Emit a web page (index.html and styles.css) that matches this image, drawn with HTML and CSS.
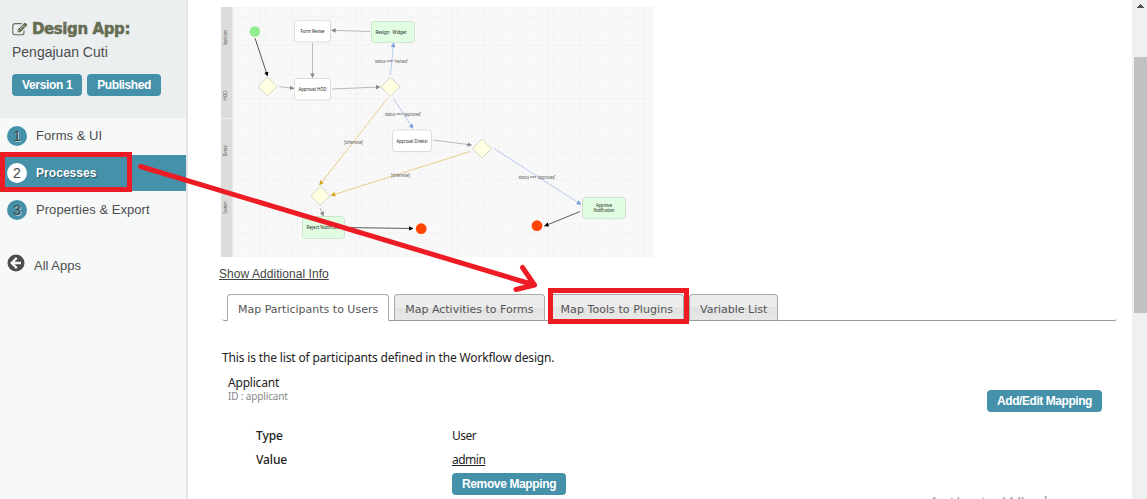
FILE: index.html
```html
<!DOCTYPE html>
<html lang="en">
<head>
<meta charset="utf-8">
<title>Design App: Pengajuan Cuti</title>
<link rel="stylesheet" href="styles.css">
</head>
<body>
<div class="app">
  <aside class="sidebar">
    <header class="app-head">
      <h1 class="app-title">
        <svg class="edit-icon" viewBox="0 0 16 14" width="16" height="14"><path d="M9.800 1.600H3.200Q.8 1.600 .8 4v6.400q0 2.400 2.400 2.400h6.500q2.300 0 2.300-2.400V8.600" fill="none" stroke="currentColor" stroke-width="1.100"/><path d="M5.700 10.200V7.500L12.300.9q.7-.7 1.400 0l1.300 1.300q.6.7 0 1.300L8.300 10.200z" fill="currentColor"/><path d="M7 8.900 6.600 8M11.100 3.500l1.600 1.600M8.200 7l3-3" stroke="#ebeff0" stroke-width=".8"/></svg>
        <span>Design App:</span>
      </h1>
      <p class="app-name">Pengajuan Cuti</p>
      <div class="badges"><span class="btn version">Version 1</span><span class="btn">Published</span></div>
    </header>
    <nav class="steps">
      <a class="step"><b class="num">1</b><span>Forms &amp; UI</span></a>
      <a class="step active"><b class="num">2</b><span>Processes</span></a>
      <a class="step"><b class="num">3</b><span>Properties &amp; Export</span></a>
    </nav>
    <a class="all-apps">
      <svg viewBox="0 0 18 18" width="18" height="18"><circle cx="9" cy="9" r="8.500" fill="#4c4c4c"/><path d="M9.800 3.900 4.700 9l5.100 5.100M5 9h9" fill="none" stroke="#f7f9f9" stroke-width="2.300"/></svg>
      <span>All Apps</span>
    </a>
  </aside>
  <main class="content">
    <svg class="diagram" viewBox="221 7 433 250" width="433" height="250">
      <defs>
        <pattern id="grid" x="225" y="11.500" width="4.800" height="4.800" patternUnits="userSpaceOnUse"><path d="M0 .5H4.800M.5 0V4.800" stroke="#f2f2f2" stroke-width=".7" stroke-dasharray="1.600 .8"/></pattern>
        <pattern id="major" x="228" y="17" width="32" height="27" patternUnits="userSpaceOnUse"><path d="M0 .5H32M.5 0V27M5.500 0V27" stroke="#efefef" stroke-width=".7" stroke-dasharray="2 1"/></pattern>
        <marker id="a-gray" viewBox="0 0 6 6" refX="5.500" refY="3" markerWidth="4.500" markerHeight="4.500" markerUnits="userSpaceOnUse" orient="auto"><path d="M0 0 6 3 0 6z" fill="#858585"/></marker>
        <marker id="a-black" viewBox="0 0 6 6" refX="5.500" refY="3" markerWidth="4.500" markerHeight="4.500" markerUnits="userSpaceOnUse" orient="auto"><path d="M0 0 6 3 0 6z" fill="#000"/></marker>
        <marker id="a-blue" viewBox="0 0 6 6" refX="5.500" refY="3" markerWidth="4.800" markerHeight="4.800" markerUnits="userSpaceOnUse" orient="auto"><path d="M0 0 6 3 0 6z" fill="#7c9fdf"/></marker>
        <marker id="a-gold" viewBox="0 0 6 6" refX="5.500" refY="3" markerWidth="4.800" markerHeight="4.800" markerUnits="userSpaceOnUse" orient="auto"><path d="M0 0 6 3 0 6z" fill="#d6a41c"/></marker>
      </defs>
      <rect x="221" y="7" width="433" height="250" fill="#f9f9f9"/>
      <rect x="221" y="7" width="433" height="250" fill="url(#grid)"/>
      <rect x="221" y="7" width="433" height="250" fill="url(#major)"/>
      <rect x="221" y="7" width="11.500" height="250" fill="#dcdcdc"/>
      <path d="M221 118.500h11.500" stroke="#efefef"/>
      <g class="lane">
        <text transform="translate(227 37.500) rotate(-90)" textLength="15" lengthAdjust="spacingAndGlyphs">Applicant</text>
        <text transform="translate(227 95.500) rotate(-90)">HOD</text>
        <text transform="translate(227 150.500) rotate(-90)" textLength="11" lengthAdjust="spacingAndGlyphs">Direksi</text>
        <text transform="translate(227 207.500) rotate(-90)" textLength="12" lengthAdjust="spacingAndGlyphs">System</text>
      </g>
      <g class="edge black"><path d="M255 38 267.500 76"/><path d="M345 227.500 413 228.500"/><path d="M580 211.500 544.500 226"/></g>
      <g class="edge gray"><path d="M279 86.500 294 88.500"/><path d="M312.500 43V77.500"/><path d="M370 31.500 331.500 30.300"/><path d="M332 89 380 87"/><path d="M433 140 471.500 145"/><path d="M320 208 323.500 216"/></g>
      <g class="edge blue"><path d="M390.500 75 393.500 43"/><path d="M394 99 413 128.500"/><path d="M494 148.500 581 204.500"/></g>
      <g class="edge gold"><path d="M387 99 319.500 185"/><path d="M470 151.500 331 195.500"/></g>
      <circle cx="254.800" cy="31.500" r="5.300" fill="#90ee90"/>
      <g fill="#fe4502"><circle cx="421.200" cy="228.700" r="5.400"/><circle cx="537" cy="225.700" r="5.400"/></g>
      <g class="gate"><path d="m267.500 77 9.500 9.500-9.500 9.500-9.500-9.500z"/><path d="m390.500 77.500 9.500 9.500-9.500 9.500-9.500-9.500z"/><path d="m482 139 9.500 9.500-9.500 9.500-9.500-9.500z"/><path d="m320.200 186.300 9.500 9.500-9.500 9.500-9.500-9.500z"/></g>
      <g class="task"><rect x="294.500" y="20.500" width="36" height="21.500" rx="3"/><rect x="294.500" y="78.500" width="36" height="21.500" rx="3"/><rect x="392.500" y="130" width="39" height="21.500" rx="3"/></g>
      <g class="tool"><rect x="371.500" y="21.500" width="43" height="21" rx="3"/><rect x="302.500" y="216.500" width="42" height="22" rx="3"/><rect x="582.500" y="197.300" width="43" height="21.500" rx="3"/></g>
      <g class="node-text">
        <text x="312.500" y="32.800" textLength="24" lengthAdjust="spacingAndGlyphs">Form Revise</text>
        <text x="312.500" y="91.200" textLength="28" lengthAdjust="spacingAndGlyphs">Approval HOD</text>
        <text x="412" y="142.800" textLength="31" lengthAdjust="spacingAndGlyphs">Approval Direksi</text>
        <text x="382.500" y="34.200" textLength="14" lengthAdjust="spacingAndGlyphs">Resign</text><text x="399.500" y="34.200" textLength="14" lengthAdjust="spacingAndGlyphs">Widget</text>
        <text x="325.500" y="229.200" textLength="38" lengthAdjust="spacingAndGlyphs">Reject Notification</text>
        <text x="604" y="207" textLength="16" lengthAdjust="spacingAndGlyphs">Approve</text><text x="604" y="212" textLength="21" lengthAdjust="spacingAndGlyphs">Notification</text>
      </g>
      <g class="edge-text">
        <text x="391.500" y="62.500" textLength="33" lengthAdjust="spacingAndGlyphs">status === 'revised'</text>
        <text x="403" y="115.700" textLength="36" lengthAdjust="spacingAndGlyphs">status === 'approved'</text>
        <text x="353.500" y="144.200" textLength="19" lengthAdjust="spacingAndGlyphs">[otherwise]</text>
        <text x="400.500" y="176.500" textLength="19" lengthAdjust="spacingAndGlyphs">[otherwise]</text>
        <text x="537" y="179" textLength="37" lengthAdjust="spacingAndGlyphs">status === 'approved'</text>
      </g>
    </svg>
    <a class="info-link">Show Additional Info</a>
    <div class="tabs">
      <span class="tab current">Map Participants to Users</span>
      <span class="tab">Map Activities to Forms</span>
      <span class="tab tab-tools">Map Tools to Plugins</span>
      <span class="tab">Variable List</span>
    </div>
    <section class="panel">
      <p class="intro">This is the list of participants defined in the Workflow design.</p>
      <div class="participant">
        <div><div class="p-name">Applicant</div><div class="p-id">ID : applicant</div></div>
        <span class="btn add">Add/Edit Mapping</span>
      </div>
      <dl class="details">
        <dt>Type</dt><dd>User</dd>
        <dt>Value</dt><dd><a class="user">admin</a></dd>
      </dl>
      <span class="btn remove">Remove Mapping</span>
    </section>
  </main>
  <div class="scrollbar"><svg viewBox="0 0 15 10" width="15" height="10"><path d="M5 8h7v-1h-1v-1h-1v-1h-1v-1h-1v1h-1v1h-1v1h-1z" fill="#505050"/></svg><div class="thumb"></div></div>
  <div class="watermark">Activate Windows</div>
  <svg class="notes" viewBox="0 0 1147 499" width="1147" height="499">
    <g fill="none" stroke="#ed1c24" stroke-width="5">
      <rect x="2.500" y="154.500" width="127" height="35"/>
      <rect x="550.500" y="290.500" width="136" height="31"/>
      <path d="M140.500 166.500 534.500 285M522.500 267.500 534.500 285 516 289.500" stroke-linecap="round" stroke-linejoin="round"/>
    </g>
  </svg>
</div>
</body>
</html>
```

FILE: styles.css
```css
* { box-sizing: border-box; }
body { margin: 0; background: #fff; color: #222; overflow: hidden; font-family: "Liberation Sans", Arial, sans-serif; }
h1, p, dl, dd { margin: 0; }
.app { position: relative; display: flex; width: 1147px; height: 499px; overflow: hidden; }

/* Sidebar */
.sidebar { width: 188px; background: #f7f9f9; border-right: 2px solid #e2e4e5; color: #4d4d4d; font-size: 13px; }
.app-head { height: 118px; padding: 19px 0 0 12px; background: #ebeff0; }
.app-title { display: flex; align-items: center; gap: 4px; height: 20px; color: #666d52; font: bold 15px/20px "DejaVu Sans", Verdana, sans-serif; white-space: nowrap; }
.app-title span { letter-spacing: -.4px; -webkit-text-stroke: .5px #666d52; }
.app-name { padding-top: 4px; font-size: 14px; line-height: 19px; letter-spacing: 0; }
.badges { display: flex; gap: 5px; padding-top: 12px; }
.btn { display: inline-block; height: 22px; padding: 0 10px; border-radius: 4px; background: #4591a9; color: #fff; font: bold 12px/22px "Liberation Sans", Arial, sans-serif; letter-spacing: -.4px; white-space: nowrap; }
.version { letter-spacing: -.35px; }
.step { display: flex; align-items: center; gap: 9px; height: 36px; padding: 0 0 1px 7px; }
.step + .step { margin-top: 1px; }
.num { width: 20px; height: 20px; border-radius: 50%; background: #4591a9; color: #444; font-weight: normal; font-size: 14px; line-height: 20px; text-align: center; text-shadow: 1px 1px 0 #a6ced9; }
.step span { letter-spacing: .05px; }
.active { background: #4591a9; color: #fff; font-weight: bold; font-size: 12px; text-shadow: 1px 1px 1px #285766; }
.active .num { background: #fff; text-shadow: none; }
.all-apps { display: flex; align-items: center; gap: 9px; margin-top: 24px; padding-left: 7px; height: 22px; }
.all-apps span { padding-top: 5px; }

/* Process page */
.content { flex: 1; padding: 7px 15px 0 33px; }
.diagram { display: block; }
.lane text, .node-text text, .edge-text text { font-family: "Noto Sans", sans-serif; font-size: 5.3px; text-anchor: middle; }
.lane text { font-size: 4.6px; fill: #555; }
.node-text text { fill: #222; }
.edge-text text { font-size: 4.8px; fill: #555; }
.edge { fill: none; stroke-width: .8; }
.black { stroke: #333; }
.gray { stroke: #aaa; }
.blue { stroke: #a6bfec; }
.gold { stroke: #e6c26e; }
.black path { marker-end: url(#a-black); }
.gray path { marker-end: url(#a-gray); }
.blue path { marker-end: url(#a-blue); }
.gold path { marker-end: url(#a-gold); }
.gate { fill: #ffffe2; stroke: #c9c9c0; stroke-width: .8; }
.task { fill: #fff; stroke: #d4d4d4; stroke-width: .8; }
.tool { fill: #e1fde1; stroke: #c5dec5; stroke-width: .8; }
.info-link { display: block; width: max-content; margin: 9px 0 0 -2px; font-size: 12px; line-height: 16px; letter-spacing: .05px; color: #444; text-decoration: underline; }
.tabs { display: flex; gap: 5px; height: 27px; margin: 12px 0 0 1px; padding-left: 5px; width: 895px; border-bottom: 1px solid #999; border-radius: 0 0 3px 3px; }
.tab { height: 27px; padding: 0 10px; border: 1px solid #aaa; border-bottom-color: #999; border-radius: 4px 4px 0 0; background: linear-gradient(#ececec 50%, #e2e2e2 50%, #e8e8e8); color: #555; font: 11px/29px "DejaVu Sans", Verdana, sans-serif; white-space: nowrap; }
.tab-tools { letter-spacing: .06px; }
.current { background: #fff; border-bottom-color: #fff; }
.panel { padding: 29px 15px 0 1px; font-family: "Noto Sans", "Open Sans", sans-serif; font-size: 12px; line-height: 16px; }
.intro { letter-spacing: -.155px; white-space: nowrap; }
.participant { display: flex; justify-content: space-between; margin-top: 9px; padding-left: 6px; }
.p-name { letter-spacing: -.2px; }
.p-id { font-size: 10px; line-height: 10px; letter-spacing: -.15px; color: #888; }
.add { margin-top: 15px; letter-spacing: -.44px; }
.details { display: grid; grid-template-columns: 196px 1fr; row-gap: 8px; margin: 16px 0 0 34px; }
.details dt { font-weight: 500; letter-spacing: -.1px; }
.details dd { letter-spacing: -.5px; }
.user { letter-spacing: -.5px; text-decoration: underline; }
.remove { margin: 5px 0 0 230px; letter-spacing: -.37px; }

.scrollbar { width: 15px; background: #f0f0f0; }
.scrollbar svg { display: block; }
.thumb { height: 256px; margin: 47px 0 0 2px; background: #c1c1c1; }
.watermark { position: absolute; left: 928px; top: 491px; color: #aaa; font: 19.500px/26px "Open Sans", sans-serif; letter-spacing: -.3px; white-space: nowrap; }
.notes { position: absolute; left: 0; top: 0; pointer-events: none; }
```
